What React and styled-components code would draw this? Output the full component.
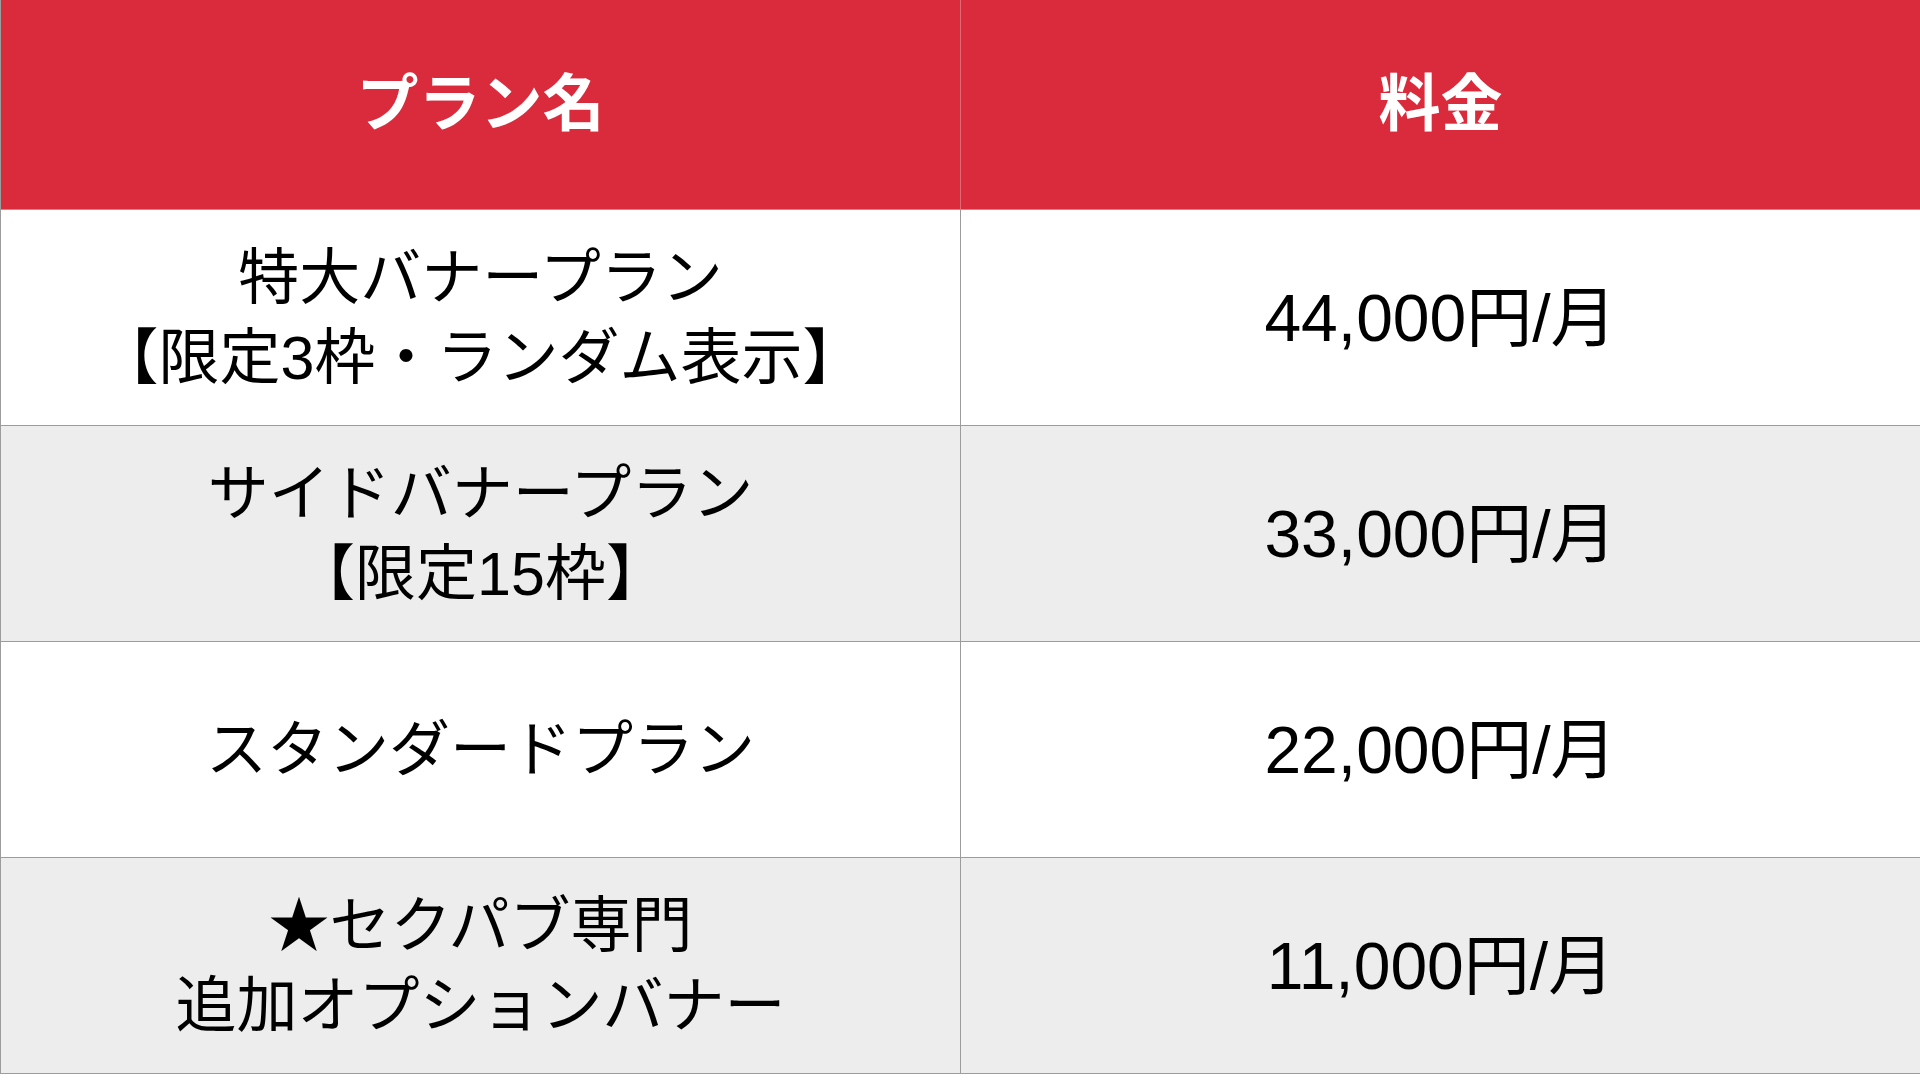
import React from "react";
import styled, { createGlobalStyle } from "styled-components";

const GlobalStyle = createGlobalStyle`
  html, body {
    margin: 0;
    padding: 0;
    background: #ffffff;
    overflow: hidden;
  }
  body {
    font-family: "Liberation Sans", "Noto Sans CJK JP", sans-serif;
  }
`;

const Table = styled.div`
  width: 1921px;
  display: flex;
  flex-direction: column;
`;

const Row = styled.div`
  display: grid;
  grid-template-columns: 961px 960px;
  height: ${p => (p.head ? "210px" : "216px")};
  box-sizing: border-box;
  border-bottom: 1px solid #9c9c9c;
  background: ${p => (p.head ? "#d92b3b" : p.shade ? "#ededed" : "#ffffff")};
`;

const Cell = styled.div`
  display: flex;
  flex-direction: column;
  align-items: center;
  justify-content: center;
  box-sizing: border-box;
  border-left: ${p => (p.first ? "1px solid #9c9c9c" : "none")};
  border-right: 1px solid ${p => (p.head ? "#e46872" : "#9c9c9c")};
  color: ${p => (p.head ? "#ffffff" : "#000000")};
  font-size: ${p => (p.price ? "66px" : p.head ? "62px" : "61px")};
  font-weight: ${p => (p.head ? 700 : 400)};
  line-height: 80px;
  text-align: center;
  white-space: nowrap;
`;

const Line = styled.span`
  display: block;
`;

const plans = [
  { name: ["特大バナープラン", "【限定3枠・ランダム表示】"], price: "44,000円/月" },
  { name: ["サイドバナープラン", "【限定15枠】"], price: "33,000円/月" },
  { name: ["スタンダードプラン"], price: "22,000円/月" },
  { name: ["★セクパブ専門", "追加オプションバナー"], price: "11,000円/月" },
];

export default function App() {
  return (
    <>
      <GlobalStyle />
      <Table>
        <Row head>
          <Cell head first>プラン名</Cell>
          <Cell head>料金</Cell>
        </Row>
        {plans.map((p, i) => (
          <Row key={i} shade={i % 2 === 1}>
            <Cell first>
              {p.name.map((l, j) => (
                <Line key={j}>{l}</Line>
              ))}
            </Cell>
            <Cell price>{p.price}</Cell>
          </Row>
        ))}
      </Table>
    </>
  );
}
